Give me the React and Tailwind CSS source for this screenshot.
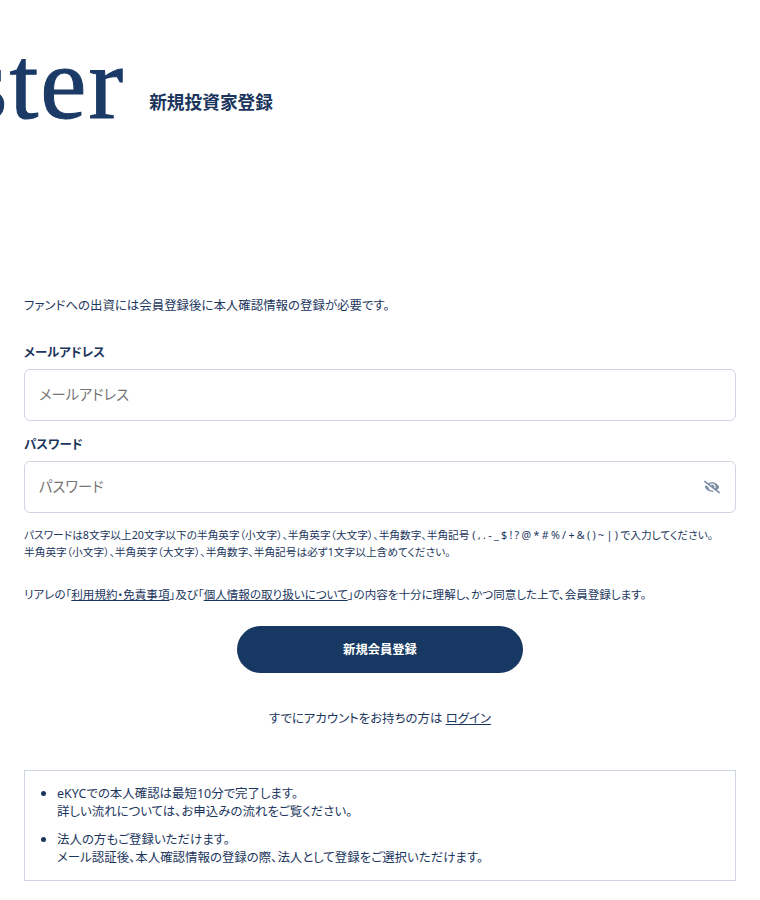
import { FaEyeSlash } from 'react-icons/fa'

function Field({ label, placeholder, children }) {
  return (
    <div>
      <label className="block text-[12.45px] leading-[18px] font-bold">{label}</label>
      <div className="relative mt-[7px]">
        <input
          placeholder={placeholder}
          className="w-full h-[52px] pl-[14px] pr-[15px] pb-[2px] bg-white border border-[#ced4e0] rounded-[6px] text-[14.3px] placeholder:text-[#757575] outline-none"
        />
        {children}
      </div>
    </div>
  )
}

const bullet = "relative before:absolute before:left-[-16px] before:top-[6px] before:size-[5px] before:rounded-full before:bg-[#1b365d] before:content-['']"

export default function App() {
  return (
    <div className="h-[900px] overflow-hidden bg-white text-[#1b365d] font-['Noto_Sans','Noto_Sans_CJK_JP',sans-serif] [font-feature-settings:'palt']">
      {/* Header */}
      <header className="h-[280px] flex items-start overflow-hidden">
        <span className="shrink-0 mt-[31px] ml-[-33px] font-['Liberation_Serif',serif] text-[104px] leading-[104px] tracking-[2px] text-[#1b3a66] [-webkit-text-stroke:1px_#1b3a66]">ster</span>
        <span className="mt-[89px] ml-[24px] text-[17.7px] leading-[26px] font-bold">新規投資家登録</span>
      </header>

      <main className="px-6">
        <p className="text-[12.45px] leading-[18px] mt-[17px]">ファンドへの出資には会員登録後に本人確認情報の登録が必要です。</p>

        <div className="mt-[29px]">
          <Field label="メールアドレス" placeholder="メールアドレス" />
        </div>
        <div className="mt-[15px]">
          <Field label="パスワード" placeholder="パスワード">
            <FaEyeSlash className="absolute right-[16px] top-[18px] w-4 h-4 text-[#7b8ba3]" />
          </Field>
        </div>

        <p className="mt-[14px] text-[10.7px] leading-[16.5px]">
          パスワードは8文字以上20文字以下の半角英字（小文字）、半角英字（大文字）、半角数字、半角記号 <span className="tracking-[-0.23px]">( , . - _ $ ! ? @ * # % / + &amp; ( ) ~ | )</span> で入力してください。
          <br />
          半角英字（小文字）、半角英字（大文字）、半角数字、半角記号は必ず1文字以上含めてください。
        </p>

        <p className="mt-[26px] text-[11.55px] leading-[18px]">
          リアレの「<a className="underline">利用規約・免責事項</a>」及び「<a className="underline">個人情報の取り扱いについて</a>」の内容を十分に理解し、かつ同意した上で、会員登録します。
        </p>

        <div className="mt-[22px] flex justify-center">
          <button className="w-[286px] h-[47px] pt-[1px] rounded-full bg-[#163862] text-white text-[12.3px] font-bold">新規会員登録</button>
        </div>

        <p className="mt-[37px] text-center text-[12.45px] leading-[18px]">
          すでにアカウントをお持ちの方は <a className="underline">ログイン</a>
        </p>

        <div className="mt-[42px] border border-[#ced4e0] pl-[32px] pr-4 pt-[14px] pb-[13px] text-[12.45px] leading-[18px]">
          <ul className="list-none space-y-[10px]">
            <li className={bullet}>eKYCでの本人確認は最短10分で完了します。<br />詳しい流れについては、お申込みの流れをご覧ください。</li>
            <li className={bullet}>法人の方もご登録いただけます。<br />メール認証後、本人確認情報の登録の際、法人として登録をご選択いただけます。</li>
          </ul>
        </div>
      </main>
    </div>
  )
}
